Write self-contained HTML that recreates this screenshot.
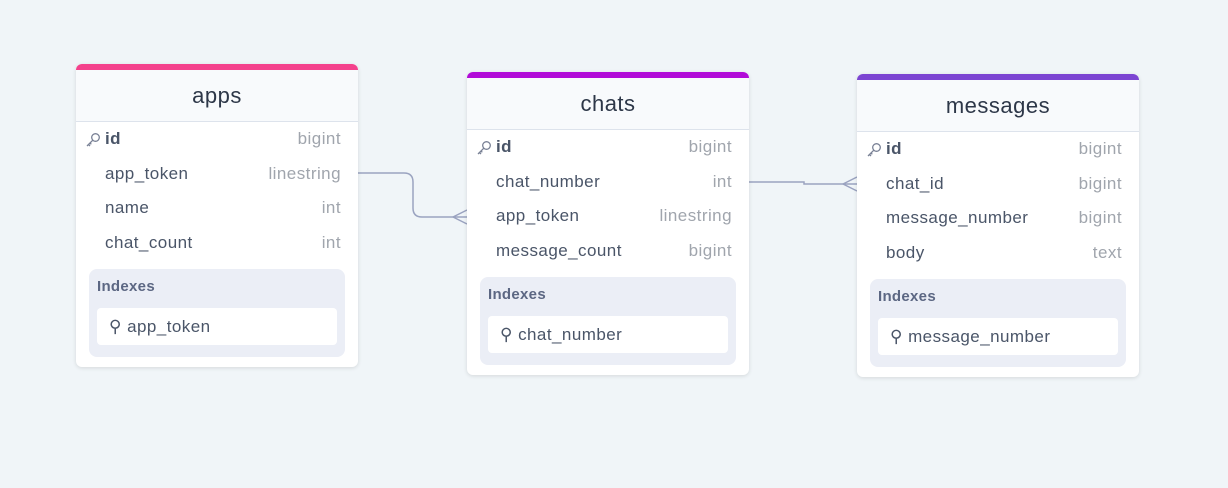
<!DOCTYPE html>
<html><head><style>
body{margin:0;width:1228px;height:488px;background:#f0f5f8;font-family:"Liberation Sans",sans-serif;position:relative;overflow:hidden}
.card{position:absolute;width:282px;background:#fff;border-radius:6px;box-shadow:0 1px 4px rgba(0,0,0,.12);overflow:hidden}
.bar{height:6px}
.hd{height:51px;background:#f8fafc;border-bottom:1px solid #dde3ec;text-align:center;line-height:51px;font-size:22px;color:#2d3748;letter-spacing:.5px}
.row{height:34.5px;line-height:34.5px;position:relative;font-size:17px;color:#4a5568;padding-left:29px;letter-spacing:.45px}
.row .t{position:absolute;right:17px;top:0;color:#a0a5ad}
.row.pk{font-weight:bold}
.row.pk .t{font-weight:normal}
.key{position:absolute;left:9px;top:10px}
.ix{margin:9px 13px 10px;background:#ebeef6;border-radius:8px;padding:8px 8px 12px}
.ix .l{font-size:15px;font-weight:bold;color:#5c6783;height:22px;line-height:20px;letter-spacing:.3px}
.ix .b{background:#fff;border-radius:4px;height:37px;line-height:37px;margin-top:9px;font-size:17px;color:#4a5568;padding-left:12px;letter-spacing:.45px}
</style></head><body>
<svg width="1228" height="488" style="position:absolute;left:0;top:0">
<g fill="none" stroke="#9aa3c0" stroke-width="1.5">
<path d="M357 173 H404 Q413 173 413 182 V208 Q413 217 422 217 H467"/>
<path d="M453 217 L467 210 M453 217 L467 224"/>
<path d="M749 182 H804 V184 H857"/>
<path d="M843 184 L857 177 M843 184 L857 191"/>
</g></svg>

<div class="card" style="left:76px;top:64px">
<div class="bar" style="background:#f4418c"></div>
<div class="hd">apps</div>
<div class="row pk"><svg class="key" width="16" height="16" viewBox="0 0 16 16" fill="none" stroke="#7a8296" stroke-width="1.3"><circle cx="10.5" cy="5.5" r="3.8"/><path d="M7.8 8.2 L2 14 M3.5 12.5 L5 14 M5 11 L6.3 12.3"/></svg>id<span class="t">bigint</span></div>
<div class="row">app_token<span class="t">linestring</span></div>
<div class="row">name<span class="t">int</span></div>
<div class="row">chat_count<span class="t">int</span></div>
<div class="ix"><div class="l">Indexes</div><div class="b">⚲ app_token</div></div>
</div>

<div class="card" style="left:467px;top:72px">
<div class="bar" style="background:#b10bd8"></div>
<div class="hd">chats</div>
<div class="row pk"><svg class="key" width="16" height="16" viewBox="0 0 16 16" fill="none" stroke="#7a8296" stroke-width="1.3"><circle cx="10.5" cy="5.5" r="3.8"/><path d="M7.8 8.2 L2 14 M3.5 12.5 L5 14 M5 11 L6.3 12.3"/></svg>id<span class="t">bigint</span></div>
<div class="row">chat_number<span class="t">int</span></div>
<div class="row">app_token<span class="t">linestring</span></div>
<div class="row">message_count<span class="t">bigint</span></div>
<div class="ix"><div class="l">Indexes</div><div class="b">⚲ chat_number</div></div>
</div>

<div class="card" style="left:857px;top:74px">
<div class="bar" style="background:#7c45d2"></div>
<div class="hd">messages</div>
<div class="row pk"><svg class="key" width="16" height="16" viewBox="0 0 16 16" fill="none" stroke="#7a8296" stroke-width="1.3"><circle cx="10.5" cy="5.5" r="3.8"/><path d="M7.8 8.2 L2 14 M3.5 12.5 L5 14 M5 11 L6.3 12.3"/></svg>id<span class="t">bigint</span></div>
<div class="row">chat_id<span class="t">bigint</span></div>
<div class="row">message_number<span class="t">bigint</span></div>
<div class="row">body<span class="t">text</span></div>
<div class="ix"><div class="l">Indexes</div><div class="b">⚲ message_number</div></div>
</div>
</body></html>
